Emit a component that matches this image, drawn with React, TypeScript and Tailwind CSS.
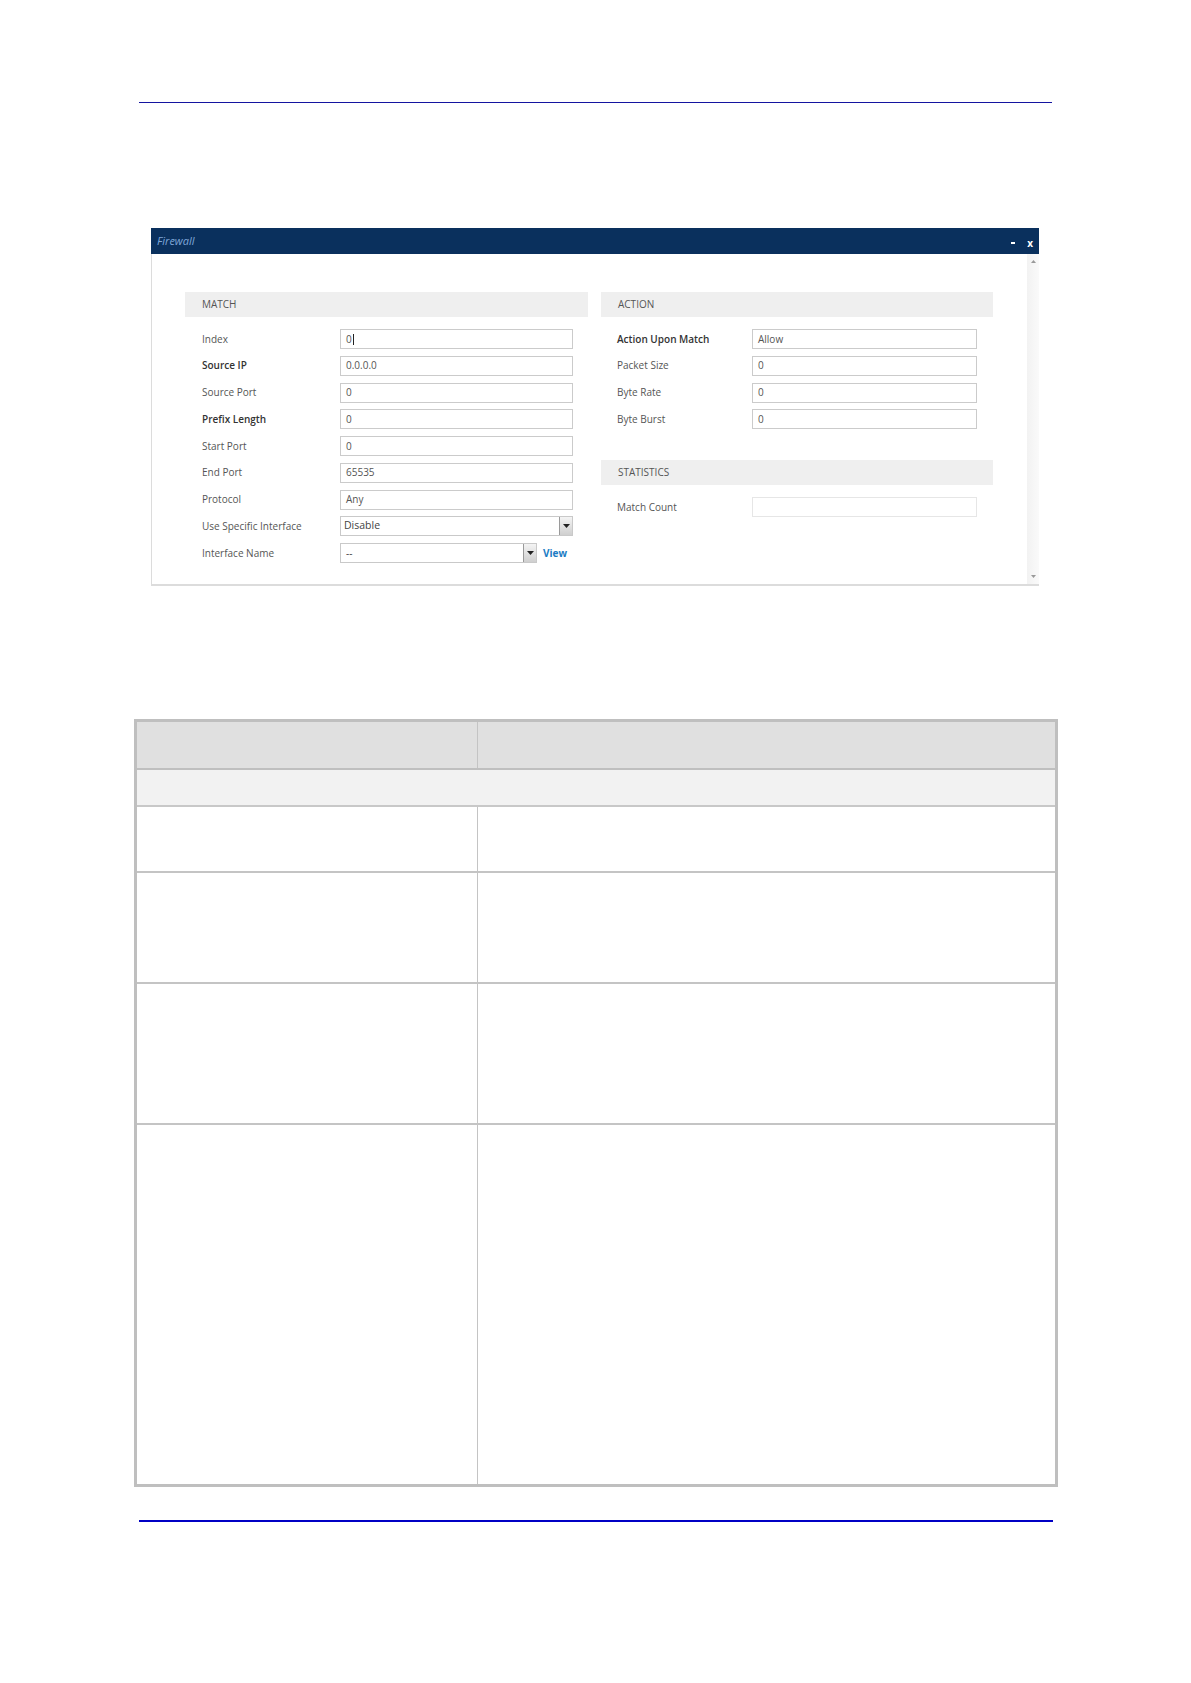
import React from 'react';

type Row = { label: string; value?: string; bold?: boolean; kind?: 'input' | 'select' | 'selectView' | 'empty'; cursor?: boolean };

const matchRows: Row[] = [
    { label: 'Index', value: '0', cursor: true },
    { label: 'Source IP', value: '0.0.0.0', bold: true },
    { label: 'Source Port', value: '0' },
    { label: 'Prefix Length', value: '0', bold: true },
    { label: 'Start Port', value: '0' },
    { label: 'End Port', value: '65535' },
    { label: 'Protocol', value: 'Any' },
    { label: 'Use Specific Interface', value: 'Disable', kind: 'select' },
    { label: 'Interface Name', value: '--', kind: 'selectView' },
];

const actionRows: Row[] = [
    { label: 'Action Upon Match', value: 'Allow', bold: true },
    { label: 'Packet Size', value: '0' },
    { label: 'Byte Rate', value: '0' },
    { label: 'Byte Burst', value: '0' },
];

function SelectArrow() {
    return (
        <div className="flex h-full w-[13px] items-center justify-center border-l border-[#9a9a9a] bg-gradient-to-b from-[#f4f4f4] to-[#cfcfcf]">
            <svg width="7" height="4" viewBox="0 0 7 4"><path d="M0 0h7L3.5 4z" fill="#222" /></svg>
        </div>
    );
}

function Field({ row, labelW, inputW }: { row: Row; labelW: string; inputW: string }) {
    const kind = row.kind ?? 'input';
    return (
        <div className="flex h-[20px] items-center">
            <div className={`${labelW} shrink-0 text-[10px] ${row.bold ? 'font-semibold text-[#333]' : 'text-[#555]'}`}>{row.label}</div>
            {kind === 'selectView' ? (
                <div className={`flex ${inputW} items-center`}>
                    <div className="flex h-[20px] w-[197px] items-center justify-between border border-[#c9c9c9] bg-white pl-[5px] text-[10px] text-[#444]">
                        <span>{row.value}</span>
                        <SelectArrow />
                    </div>
                    <span className="ml-[6px] text-[10px] font-bold text-[#1b7cc4]">View</span>
                </div>
            ) : kind === 'select' ? (
                <div className={`flex h-[20px] ${inputW} items-center justify-between border border-[#c9c9c9] bg-white pl-[3px] text-[10.5px] text-[#444]`}>
                    <span>{row.value}</span>
                    <SelectArrow />
                </div>
            ) : (
                <div className={`flex h-[20px] ${inputW} items-center border ${kind === 'empty' ? 'border-[#e6e6e6]' : 'border-[#cbcbcb]'} bg-white pl-[5px] text-[10px] text-[#555]`}>
                    <span>{row.value}</span>
                    {row.cursor && <span className="ml-px h-[11px] w-px bg-[#222]" />}
                </div>
            )}
        </div>
    );
}

function SectionHead({ title }: { title: string }) {
    return (
        <div className="flex h-[25px] items-center bg-[#efefef] pl-[17px] text-[10px] uppercase text-[#555]">{title}</div>
    );
}

export default function App() {
    return (
        <div className="min-h-[1683px] w-[1191px] bg-white pt-[102px] font-['Open_Sans',sans-serif]">
            <div className="ml-[139px] h-px w-[913px] bg-[#1414a0]" />

            {/* Firewall dialog */}
            <div className="ml-[151px] mt-[125px] w-[888px]">
                <div className="flex h-[26px] items-center justify-between bg-[#0a305d] pl-[6px] pr-[6px]">
                    <span className="text-[11px] italic text-[#7fa6d8]">Firewall</span>
                    <div className="flex items-center gap-[12px] pt-[4px] text-[10px] font-bold text-white">
                        <span className="h-[2px] w-[4px] bg-white" />
                        <span>x</span>
                    </div>
                </div>
                <div className="flex h-[332px]">
                    <div className="flex-1 border-b-2 border-l border-[#dcdcdc] pl-[33px] pt-[38px]">
                        <div className="flex gap-[13px]">
                            <div className="w-[403px]">
                                <SectionHead title="Match" />
                                <div className="mt-[12px] flex flex-col gap-[6.75px] pl-[17px]">
                                    {matchRows.map((r) => (
                                        <Field key={r.label} row={r} labelW="w-[138px]" inputW="w-[233px]" />
                                    ))}
                                </div>
                            </div>
                            <div className="w-[392px]">
                                <SectionHead title="Action" />
                                <div className="mt-[12px] flex flex-col gap-[6.75px] pl-[16px]">
                                    {actionRows.map((r) => (
                                        <Field key={r.label} row={r} labelW="w-[135px]" inputW="w-[225px]" />
                                    ))}
                                </div>
                                <div className="mt-[31px]">
                                    <SectionHead title="Statistics" />
                                </div>
                                <div className="mt-[12px] pl-[16px]">
                                    <Field row={{ label: 'Match Count', value: '', kind: 'empty' }} labelW="w-[135px]" inputW="w-[225px]" />
                                </div>
                            </div>
                        </div>
                    </div>
                    <div className="flex w-[12px] flex-col items-center justify-between border-b-2 border-[#dcdcdc] bg-gradient-to-r from-[#f2f2f2] to-[#fafafa] py-[6px]">
                        <svg width="5" height="3" viewBox="0 0 5 3"><path d="M0 3h5L2.5 0z" fill="#999" /></svg>
                        <svg width="5" height="3" viewBox="0 0 5 3"><path d="M0 0h5L2.5 3z" fill="#999" /></svg>
                    </div>
                </div>
            </div>

            {/* Parameter table */}
            <div className="ml-[134px] mt-[133px] w-[924px] border-[3px] border-[#bfbfbf]">
                <div className="flex h-[48px] border-b-2 border-[#bfbfbf] bg-[#e0e0e0]">
                    <div className="w-[341px] border-r border-[#c4c4c4]" />
                    <div className="flex-1" />
                </div>
                <div className="h-[37px] border-b-2 border-[#c8c8c8] bg-[#f2f2f2]" />
                <div className="flex h-[66px] border-b-2 border-[#c4c4c4]">
                    <div className="w-[341px] border-r border-[#c4c4c4]" />
                </div>
                <div className="flex h-[111px] border-b-2 border-[#c4c4c4]">
                    <div className="w-[341px] border-r border-[#c4c4c4]" />
                </div>
                <div className="flex h-[141px] border-b-2 border-[#c4c4c4]">
                    <div className="w-[341px] border-r border-[#c4c4c4]" />
                </div>
                <div className="flex h-[359px]">
                    <div className="w-[341px] border-r border-[#c4c4c4]" />
                </div>
            </div>

            <div className="ml-[139px] mt-[33px] h-[2px] w-[914px] bg-[#0000c4]" />
        </div>
    );
}
